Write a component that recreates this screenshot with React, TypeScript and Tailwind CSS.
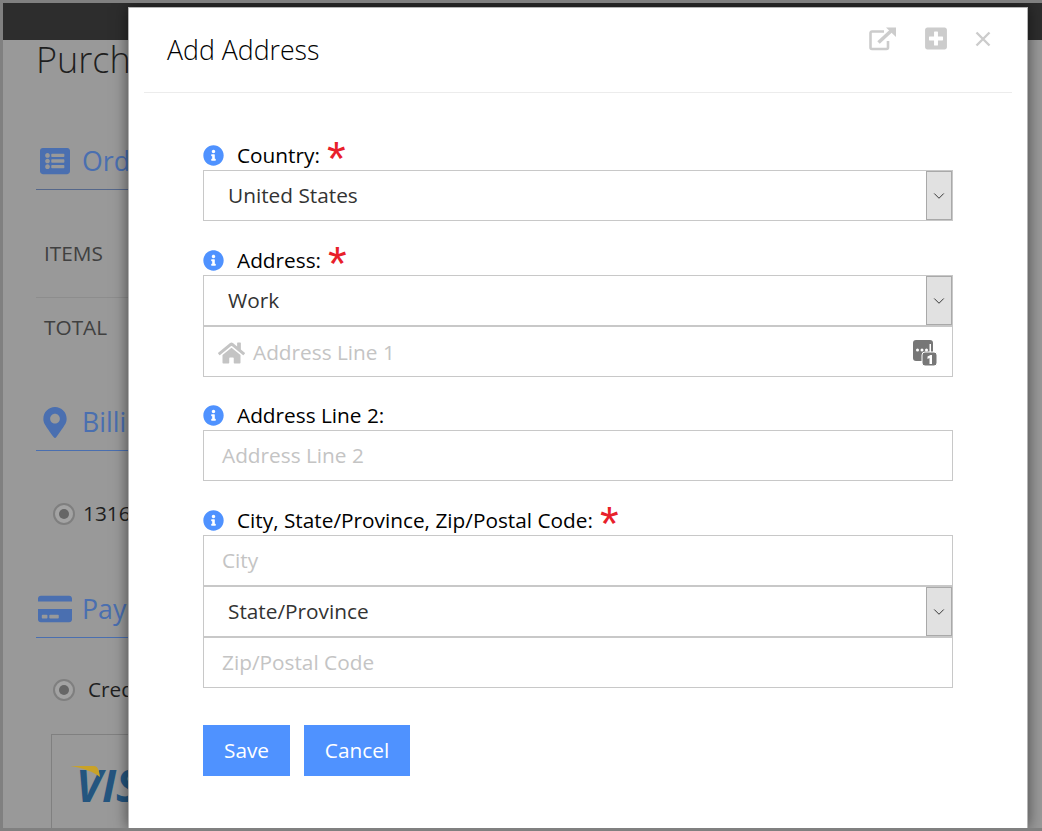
import { FaCreditCard, FaHome, FaInfoCircle, FaListAlt, FaMapMarkerAlt, FaPlusSquare } from "react-icons/fa";
import { ChevronDown } from "lucide-react";

function Star() {
    return <span className="mb-[5px] ml-[7px] h-[36px] text-[48px] leading-[48px] font-['Liberation_Sans',sans-serif] text-[#e8202a]">*</span>;
}

function FieldLabel({ text, required }: { text: string; required?: boolean }) {
    return (
        <div className="flex h-[30px] items-center text-[20.8px] text-black">
            <FaInfoCircle className="h-[21px] w-[21px] text-[#4f92ff]" />
            <span className="mt-[1px] ml-[13px]">{text}</span>
            {required && <Star />}
        </div>
    );
}

function SelectBox({ value }: { value: string }) {
    return (
        <div className="flex h-[51px] items-center justify-between border border-[#c8c8c8] bg-white pl-[24px] text-[20.8px] text-[#333333]">
            <span>{value}</span>
            <div className="flex h-full w-[26px] items-center justify-center border border-[#a9a9a9] bg-[#e1e1e1]">
                <ChevronDown className="h-[18px] w-[18px] text-[#333333]" strokeWidth={1.3} />
            </div>
        </div>
    );
}

function TextBox({ placeholder }: { placeholder: string }) {
    return (
        <div className="flex h-[51px] items-center border border-[#c8c8c8] bg-white pl-[18px] text-[20.8px] text-[#c4c4c4]">
            {placeholder}
        </div>
    );
}

function SectionTitle({ icon, text, active }: { icon: React.ReactNode; text: string; active?: boolean }) {
    return (
        <div className={`flex h-[53px] items-center border-b pb-[4px] ${active ? "border-[#4a6fb0]" : "border-[#55678a]"} text-[26.7px] text-[#4a6fb0]`}>
            <div className="mr-[9px] flex w-[37px] justify-center">{icon}</div>
            <span>{text}</span>
        </div>
    );
}

function Radio() {
    return (
        <div className="flex h-[22px] w-[22px] items-center justify-center rounded-full border-2 border-[#7f7f7f] bg-[#a3a3a3]">
            <div className="h-[10px] w-[10px] rounded-full bg-[#666666]" />
        </div>
    );
}

function ExternalIcon() {
    return (
        <svg viewBox="0 0 28 24" className="h-[24px] w-[28px]" fill="none" stroke="#cccccc">
            <path d="M19 14v6.500a1.500 1.500 0 0 1-1.500 1.500H3a1.500 1.500 0 0 1-1.500-1.500V6A1.500 1.500 0 0 1 3 4.500h12" strokeWidth="2.600" />
            <path d="M9.500 15.500 22 4" strokeWidth="3.600" />
            <path d="M17 .5h10v9.500z" fill="#cccccc" stroke="none" />
        </svg>
    );
}

function CloseIcon() {
    return (
        <svg viewBox="0 0 16 16" className="h-[16px] w-[16px]" fill="none" stroke="#cccccc" strokeWidth="2.400">
            <path d="M1.500 1.500l13 13M14.500 1.500l-13 13" />
        </svg>
    );
}

function PasswordIcon() {
    return (
        <svg viewBox="0 0 26 28" className="h-[28px] w-[26px]">
            <rect x="1" y="1" width="20" height="21" rx="3" fill="#777777" />
            <circle cx="5.500" cy="11" r="1.500" fill="#ffffff" />
            <circle cx="10" cy="11" r="1.500" fill="#ffffff" />
            <circle cx="14.500" cy="11" r="1.500" fill="#ffffff" />
            <rect x="17.500" y="5" width="1.500" height="8" fill="#ffffff" />
            <rect x="10" y="13" width="15" height="14" rx="3" fill="#777777" stroke="#ffffff" strokeWidth="1" />
            <path d="M15.500 17.500l3-1.500h1.500v9h-2.500v-6l-2 1z" fill="#ffffff" />
        </svg>
    );
}

export default function App() {
    return (
        <div className="relative h-[831px] w-[1042px] overflow-hidden border-[3px] border-r-0 border-[#808080] bg-[#999999] font-['Open_Sans',sans-serif]">
            {/* page behind the dialog */}
            <div className="h-[37px] bg-[#2d2d2d]" />
            <div className="px-[33px]">
                <h1 className="mt-[-1px] h-[42px] text-[36px] leading-[42px] font-light text-[#1f1f1f]">Purchase</h1>
                <div className="mt-[56px]">
                    <SectionTitle icon={<FaListAlt className="h-[30px] w-[30px] text-[#4a6fb0]" />} text="Order" />
                </div>
                <div className="mt-[44px] flex h-[64px] items-center border-b border-[#8d8d8d] pb-[24px] pl-[8px] text-[20.8px] text-[#404040]">ITEMS</div>
                <div className="flex h-[60px] items-center pl-[8px] text-[20.8px] text-[#404040]">TOTAL</div>
                <div className="mt-[40px]">
                    <SectionTitle active icon={<FaMapMarkerAlt className="h-[31px] w-[24px] text-[#4a6fb0]" />} text="Billing" />
                </div>
                <div className="mt-[47px] flex items-center gap-[8px] pl-[17px] text-[20.8px] text-[#1f1f1f]">
                    <Radio />
                    <span>1316</span>
                </div>
                <div className="mt-[56px]">
                    <SectionTitle active icon={<FaCreditCard className="h-[34px] w-[34px] text-[#4a6fb0]" />} text="Payment" />
                </div>
                <div className="mt-[36px] flex items-center gap-[13px] pl-[17px] text-[20.8px] text-[#1f1f1f]">
                    <Radio />
                    <span>Credit</span>
                </div>
                <div className="relative mt-[29px] ml-[15px] flex h-[120px] w-[200px] items-start border border-[#808080] pt-[22px] pl-[24px]">
                    <svg viewBox="0 0 34 14" className="absolute top-[31px] left-[18px] h-[14px] w-[34px]">
                        <path d="M0 0h24c3 0 5 3 6 11C24 6 13 2 0 0z" fill="#c9a227" />
                    </svg>
                    <span className="mt-[8px] text-[44px] leading-[40px] font-bold italic text-[#24557f]">VISA</span>
                </div>
            </div>

            {/* dialog */}
            <div className="absolute top-[4px] bottom-0 left-[125px] w-[900px] border border-b-0 border-[#b5b5b5] bg-white shadow-[0_0_14px_rgba(0,0,0,0.55)]">
                <div className="mx-[15px] flex h-[85px] items-start justify-between border-b border-[#ececec] pl-[23px]">
                    <h2 className="mt-[24px] text-[26.7px] leading-[36px] font-light text-black">Add Address</h2>
                    <div className="mt-[18px] mr-[21px] flex items-center">
                        <ExternalIcon />
                        <FaPlusSquare className="ml-[28px] h-[25px] w-[22px] text-[#cccccc]" />
                        <div className="ml-[28px]">
                            <CloseIcon />
                        </div>
                    </div>
                </div>
                <div className="px-[74px] pt-[47px]">
                    <FieldLabel text="Country:" required />
                    <SelectBox value="United States" />

                    <div className="mt-[24px]">
                        <FieldLabel text="Address:" required />
                    </div>
                    <SelectBox value="Work" />
                    <div className="flex h-[51px] items-center justify-between border border-[#c8c8c8] bg-white pt-[2px] pr-[14px] pl-[14px] text-[20.8px] text-[#c4c4c4]">
                        <div className="flex items-center gap-[8px]">
                            <FaHome className="h-[24px] w-[27px] text-[#c4c4c4]" />
                            <span>Address Line 1</span>
                        </div>
                        <PasswordIcon />
                    </div>

                    <div className="mt-[23px]">
                        <FieldLabel text="Address Line 2:" />
                    </div>
                    <TextBox placeholder="Address Line 2" />

                    <div className="mt-[24px]">
                        <FieldLabel text="City, State/Province, Zip/Postal Code:" required />
                    </div>
                    <TextBox placeholder="City" />
                    <SelectBox value="State/Province" />
                    <TextBox placeholder="Zip/Postal Code" />

                    <div className="mt-[37px] flex gap-[14px]">
                        <button className="h-[51px] w-[87px] bg-[#4f92ff] text-[20.8px] text-white">Save</button>
                        <button className="h-[51px] w-[106px] bg-[#4f92ff] text-[20.8px] text-white">Cancel</button>
                    </div>
                </div>
            </div>
        </div>
    );
}
